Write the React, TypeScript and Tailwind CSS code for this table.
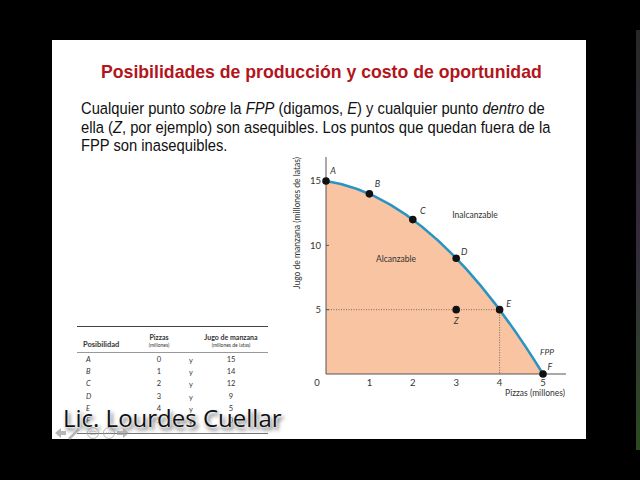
import React from 'react'

const rows = [
	{ p: 'A', pizzas: '0', jugo: '15' },
	{ p: 'B', pizzas: '1', jugo: '14' },
	{ p: 'C', pizzas: '2', jugo: '12' },
	{ p: 'D', pizzas: '3', jugo: '9' },
	{ p: 'E', pizzas: '4', jugo: '5' },
	{ p: 'F', pizzas: '5', jugo: '0' },
]

// x: 0..5 pizzas, y: 0..15 jugo
const px = (x: number) => 326 + 43.4 * x
const py = (y: number) => 373 - 12.867 * y

const points = [
	{ l: 'A', x: 0, y: 15, dx: 7, dy: -7 },
	{ l: 'B', x: 1, y: 14, dx: 8, dy: -7 },
	{ l: 'C', x: 2, y: 12, dx: 10, dy: -6 },
	{ l: 'D', x: 3, y: 9, dx: 8, dy: -3 },
	{ l: 'E', x: 4, y: 5, dx: 9, dy: -3 },
	{ l: 'F', x: 5, y: 0, dx: 7, dy: -4 },
]

function Chart() {
	const curve = `M${px(0)},${py(15)} Q${px(2.5)},${py(13.75)} ${px(5)},${py(0)}`
	return (
		<svg
			viewBox="280 154 300 250"
			className="w-[300px] h-[250px] ml-[12px] shrink-0"
			style={{ fontFamily: 'Lato, "Noto Sans", sans-serif' }}
		>
			<path
				d={`M${px(0)},${py(0)} L${px(0)},${py(15)} Q${px(2.5)},${py(13.75)} ${px(5)},${py(0)} Z`}
				fill="#f9c4a2"
			/>
			{/* dotted guides for E */}
			<line x1={px(0)} y1={py(5)} x2={px(4)} y2={py(5)} stroke="#555" strokeWidth="0.8" strokeDasharray="1 1.5" />
			<line x1={px(4)} y1={py(5)} x2={px(4)} y2={py(0)} stroke="#555" strokeWidth="0.8" strokeDasharray="1 1.5" />
			{/* axes */}
			<line x1={326} y1={156} x2={326} y2={373} stroke="#555" strokeWidth="1" />
			<line x1={326} y1={373} x2={566} y2={373} stroke="#555" strokeWidth="1" />
			{[5, 10].map((v) => (
				<line key={v} x1={326} y1={py(v)} x2={329} y2={py(v)} stroke="#555" strokeWidth="1" />
			))}
			<path d={curve} fill="none" stroke="#2a93c2" strokeWidth="2.6" />
			{points.map((p) => (
				<g key={p.l}>
					<circle cx={px(p.x)} cy={py(p.y)} r="3.8" fill="#111" />
					<text x={px(p.x) + p.dx} y={py(p.y) + p.dy} fontSize="9" fontStyle="italic" fill="#333" textAnchor="middle">
						{p.l}
					</text>
				</g>
			))}
			<circle cx={px(3)} cy={py(5)} r="3.8" fill="#111" />
			<text x={px(3)} y={py(5) + 14} fontSize="9" fontStyle="italic" fill="#333" textAnchor="middle">
				Z
			</text>
			{/* tick labels */}
			{[0, 1, 2, 3, 4, 5].map((v) => (
				<text key={v} x={v === 0 ? 317 : px(v)} y={385} fontSize="9.5" fill="#333" textAnchor="middle">
					{v}
				</text>
			))}
			{[5, 10, 15].map((v) => (
				<text key={v} x={321} y={py(v) + 3.5} fontSize="9.5" fill="#333" textAnchor="end">
					{v}
				</text>
			))}
			<text x={475} y={217} fontSize="8.5" fill="#333" textAnchor="middle">
				Inalcanzable
			</text>
			<text x={396} y={261} fontSize="8.5" fill="#333" textAnchor="middle">
				Alcanzable
			</text>
			<text x={547} y={354} fontSize="8.5" fontStyle="italic" fill="#333" textAnchor="middle">
				FPP
			</text>
			<text x={565} y={395} fontSize="8.5" fill="#333" textAnchor="end">
				Pizzas (millones)
			</text>
			<text
				x={0}
				y={0}
				fontSize="8.5"
				fill="#333"
				textAnchor="middle"
				transform="translate(300 222) rotate(-90)"
			>
				Jugo de manzana (millones de latas)
			</text>
		</svg>
	)
}

function Table() {
	return (
		<div
			className="ml-[25px] mt-[171px] w-[191px] shrink-0 text-[#333]"
			style={{ fontFamily: 'Lato, "Noto Sans", sans-serif' }}
		>
			<div className="border-t-[1.5px] border-[#444] border-b border-b-[#999] pt-[6px] pb-[3px] grid grid-cols-[62px_40px_24px_56px] items-end">
				<div className="pl-[6px] text-[7.5px] font-bold leading-[8px]">Posibilidad</div>
				<div className="text-center leading-[8px]">
					<div className="text-[7px] font-bold">Pizzas</div>
					<div className="text-[5px]">(millones)</div>
				</div>
				<div />
				<div className="text-center leading-[8px]">
					<div className="text-[7px] font-bold whitespace-nowrap">Jugo de manzana</div>
					<div className="text-[5px] whitespace-nowrap">(millones de latas)</div>
				</div>
			</div>
			{rows.map((r) => (
				<div key={r.p} className="grid grid-cols-[62px_40px_24px_56px] h-[12.4px] items-center text-[7.5px]">
					<div className="pl-[9px] italic">{r.p}</div>
					<div className="text-center">{r.pizzas}</div>
					<div className="text-center pt-[2px]">y</div>
					<div className="text-center">{r.jugo}</div>
				</div>
			))}
			<div className="mt-[6px] border-t border-[#777]" />
		</div>
	)
}

function NavControls() {
	return (
		<svg viewBox="0 0 80 14" className="absolute left-[53px] top-[426px] w-[80px] h-[14px] opacity-70">
			<path d="M2,7 L8,2 L8,5 L13,5 L13,9 L8,9 L8,12 Z" fill="#9a9a9a" />
			<path d="M16,13 L26,3" stroke="#9a9a9a" strokeWidth="2.5" />
			<circle cx="40" cy="7" r="5.5" fill="none" stroke="#9a9a9a" strokeWidth="1" />
			<rect x="37" y="5.5" width="6" height="3" fill="none" stroke="#9a9a9a" strokeWidth="0.6" />
			<circle cx="56" cy="7" r="5.5" fill="none" stroke="#9a9a9a" strokeWidth="1" />
			<path d="M53,7 h6" stroke="#9a9a9a" strokeWidth="1" strokeDasharray="1 1" />
			<path d="M76,7 L70,2 L70,5 L64,5 L64,9 L70,9 L70,12 Z" fill="#9a9a9a" />
		</svg>
	)
}

export default function App() {
	return (
		<div className="relative w-[640px] h-[480px] bg-black flex overflow-hidden">
			<div
				className="ml-[52px] mt-[40px] w-[534px] h-[399px] bg-white shrink-0"
				style={{ fontFamily: '"Liberation Sans", Arial, sans-serif' }}
			>
				<h1 className="pt-[21px] pl-[5px] text-center text-[18.5px] leading-[22px] font-bold text-[#b3151c] scale-x-[0.955]">
					Posibilidades de producción y costo de oportunidad
				</h1>
				<p className="mt-[16px] ml-[29px] text-[16.3px] leading-[18.5px] text-[#111] whitespace-nowrap scale-x-[0.905] origin-left">
					Cualquier punto <i>sobre</i> la <i>FPP</i> (digamos, <i>E</i>) y cualquier punto <i>dentro</i> de
					<br />
					ella (<i>Z</i>, por ejemplo) son asequibles. Los puntos que quedan fuera de la
					<br />
					FPP son inasequibles.
				</p>
				<div className="flex">
					<Table />
					<Chart />
				</div>
			</div>
			<div className="ml-auto mt-[30px] w-[4px] h-[420px] bg-gradient-to-b from-[#3a3a3a] via-[#4a3d55] to-[#3d6b2c] opacity-70" />
			<div
				className="absolute left-[63px] top-[406px] text-[24px] leading-[24px] font-medium text-[#111] [text-shadow:0_0_2px_#fff,0_0_3px_#fff,2px_3px_4px_rgba(0,0,0,0.75)]"
				style={{ fontFamily: '"Open Sans", sans-serif' }}
			>
				Lic. Lourdes Cuellar
			</div>
			<NavControls />
		</div>
	)
}
